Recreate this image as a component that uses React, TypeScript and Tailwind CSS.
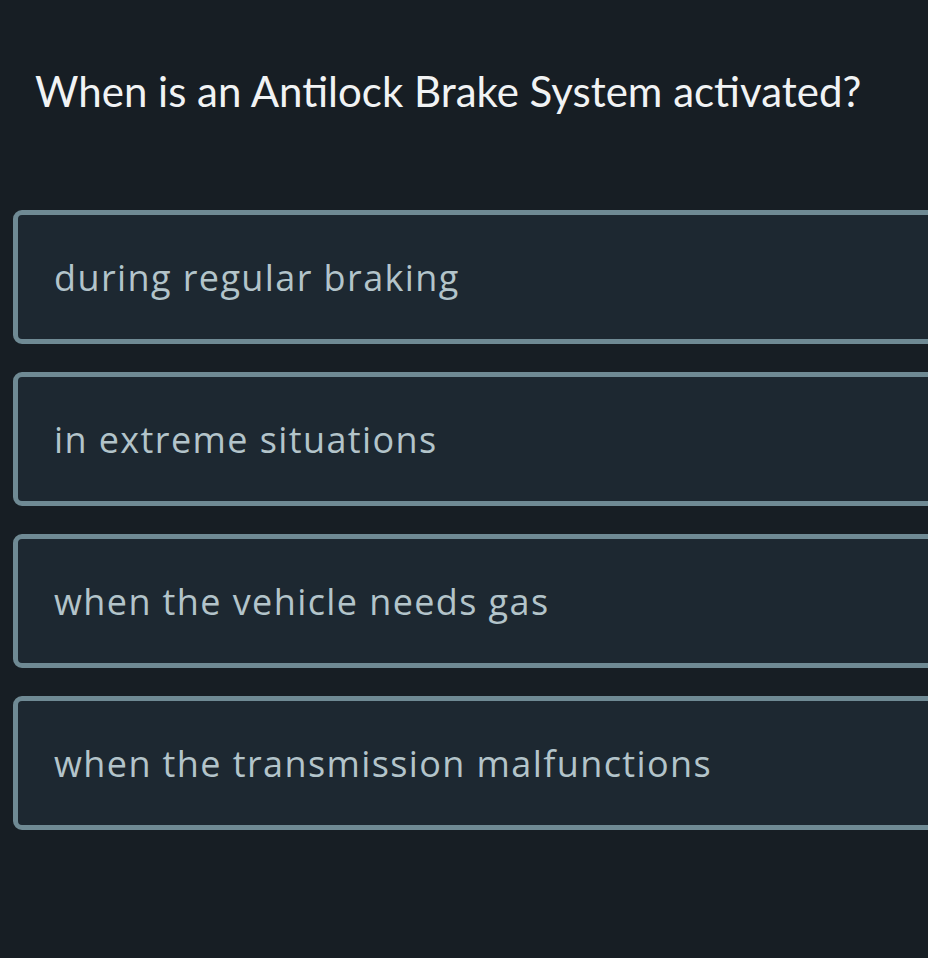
export default function App() {
  const options = [
    "during regular braking",
    "in extreme situations",
    "when the vehicle needs gas",
    "when the transmission malfunctions",
  ];
  return (
    <div
      className="w-[928px] h-[958px] overflow-hidden bg-[#171e24]"
      style={{ fontFamily: "Lato, 'Open Sans', sans-serif" }}
    >
      <h1 className="pl-[35px] pt-[67px] text-[42px] leading-[48px] font-normal text-[#f1f3f4]">
        When is an Antilock Brake System activated?
      </h1>
      <div className="mt-[95px] pl-[13px] flex flex-col gap-[28px]">
        {options.map((o) => (
          <div
            key={o}
            className="w-[940px] h-[134px] flex items-center pl-[36px] rounded-[9px] border-[5px] border-[#6f8a94] bg-[#1d2831]"
          >
            <span
              className="text-[36px] font-medium tracking-[1.4px] text-[#b3c4ca] mt-[2px]"
              style={{ fontFamily: "'Open Sans', Lato, sans-serif" }}
            >
              {o}
            </span>
          </div>
        ))}
      </div>
    </div>
  );
}
